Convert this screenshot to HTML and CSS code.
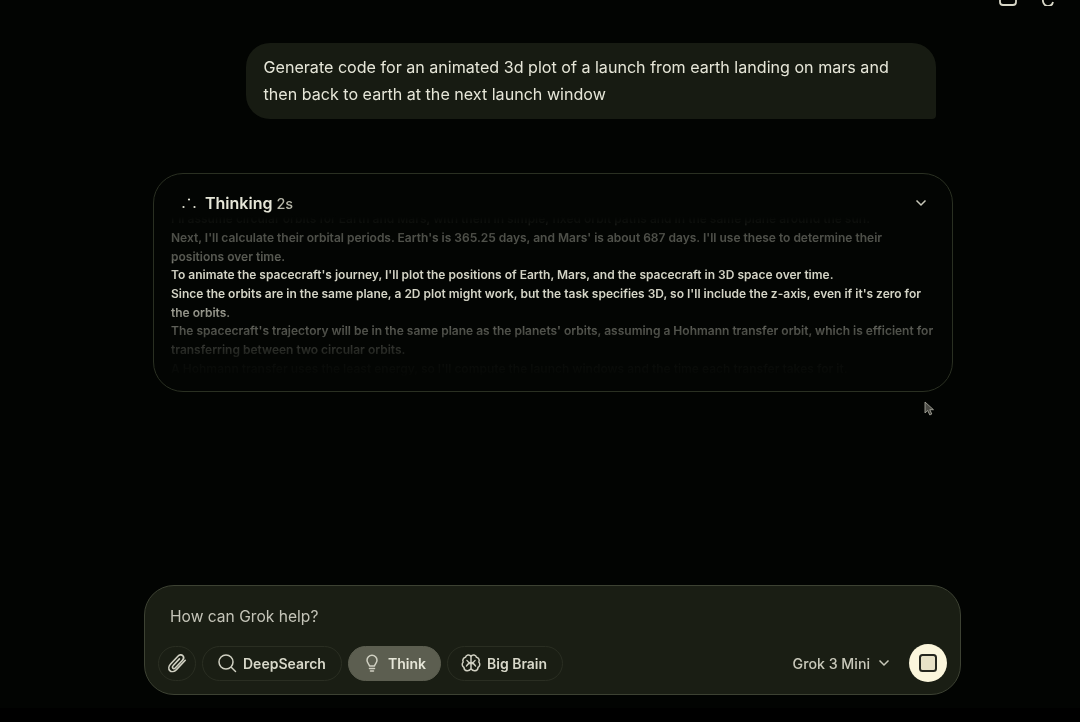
FILE: index.html
```html
<!DOCTYPE html>
<html>

<head>
    <title>Grok</title>
    <link rel="stylesheet" href="styles.css">
</head>

<body>
    <div id="page">
        <div class="topbar">
            <svg class="top-icon" width="18" height="12" viewBox="0 0 18 12"><path d="M1 1v7a3 3 0 0 0 3 3h10a3 3 0 0 0 3-3V1" /><path d="M6 4v1h6V4" /></svg>
            <svg class="top-icon" width="14" height="12" viewBox="0 0 14 12"><path d="M12 8a5 5 0 0 1-9.500 1A6 6 0 0 1 3 3" /></svg>
        </div>
        <div class="bubble">Generate code for an animated 3d plot of a launch from earth landing on mars and then back to earth at the next launch window</div>
        <div class="card">
            <div class="card-head">
                <svg class="dots" width="16" height="12" viewBox="0 0 16 12"><circle cx="2.500" cy="10" r="1.100" /><circle cx="8" cy="2.500" r="1.100" /><circle cx="13.500" cy="10" r="1.100" /></svg>
                <span class="card-title">Thinking</span>
                <span class="card-time">2s</span>
                <svg class="card-chevron" width="12" height="8" viewBox="0 0 12 8"><path d="M1.500 1.500 6 6l4.500-4.500" /></svg>
            </div>
            <div class="thoughts">
                <div class="thoughts-inner">
                    <p>I'll assume circular orbits for Earth and Mars, with them in simple, fixed orbit paths and in the same plane around the sun.</p>
                    <p>Next, I'll calculate their orbital periods. Earth's is 365.25 days, and Mars' is about 687 days. I'll use these to determine their positions over time.</p>
                    <p>To animate the spacecraft's journey, I'll plot the positions of Earth, Mars, and the spacecraft in 3D space over time.</p>
                    <p>Since the orbits are in the same plane, a 2D plot might work, but the task specifies 3D, so I'll include the z-axis, even if it's zero for the orbits.</p>
                    <p>The spacecraft's trajectory will be in the same plane as the planets' orbits, assuming a Hohmann transfer orbit, which is efficient for transferring between two circular orbits.</p>
                    <p>A Hohmann transfer uses the least energy, so I'll compute the launch windows and the time each transfer takes for it.</p>
                </div>
            </div>
        </div>
        <div class="spacer"></div>
        <div class="composer">
            <div class="prompt">How can Grok help?</div>
            <div class="tools">
                <div class="pill pill-round">
                    <svg class="icon" width="22" height="22" viewBox="0 0 20 20"><path d="M17.500 7.500 9.500 16c-2 2-4.600 2.300-6 .9s-1.200-4 .7-6l6.600-7c1.400-1.400 3.300-1.700 4.400-.6s1 3-.4 4.400l-6.200 6.600c-.8.800-1.800 1-2.400.4s-.4-1.600.4-2.400l5.600-6" /></svg>
                </div>
                <div class="pill pill-search">
                    <svg class="icon" width="20" height="20" viewBox="0 0 20 20"><circle cx="9" cy="9" r="7" /><path d="m14.500 14.500 4 4" /></svg>
                    DeepSearch
                </div>
                <div class="pill pill-think">
                    <svg class="icon" width="20" height="20" viewBox="0 0 20 20"><path d="M7.500 13c0-1.500-2.500-2.800-2.500-5.800a5 5 0 0 1 10 0c0 3-2.500 4.300-2.500 5.800Z" /><path d="M7.500 15.500h5M8.500 18h3" /></svg>
                    Think
                </div>
                <div class="pill pill-brain">
                    <svg class="icon" width="20" height="20" viewBox="0 0 20 20"><path d="M10 3.500a3 3 0 0 0-5.500.8A3.200 3.200 0 0 0 2.200 9 3.500 3.500 0 0 0 3 14.500a3.300 3.300 0 0 0 3 3.300c1.800.2 3-.7 4-2 1 1.300 2.200 2.200 4 2a3.300 3.300 0 0 0 3-3.300A3.500 3.500 0 0 0 17.800 9a3.200 3.200 0 0 0-2.300-4.700A3 3 0 0 0 10 3.500Zm0 0v12.300M6 7.500c.8 1.500 2 2.500 4 2.500s3.200-1 4-2.500M5.500 13c.8-1.500 2.500-3 4.500-3s3.700 1.500 4.500 3" /></svg>
                    Big Brain
                </div>
                <div class="model">
                    Grok 3 Mini
                    <svg class="model-chevron" width="12" height="8" viewBox="0 0 12 8"><path d="M1.500 1.500 6 6l4.500-4.500" /></svg>
                </div>
                <div class="send">
                    <svg width="20" height="20" viewBox="0 0 20 20"><rect x="2" y="2" width="16" height="16" rx="2.500" /></svg>
                </div>
            </div>
        </div>
        <svg class="cursor" width="11" height="15" viewBox="0 0 11 15"><path d="M1 1v11l2.700-2.500L5.800 14l2-1-2-4.300h3.700Z" /></svg>
    </div>
</body>

</html>
```

FILE: styles.css
```css
* {
    box-sizing: border-box;
}

html,
body {
    margin: 0;
    height: 100%;
    background-color: #000;
}

body {
    font-family: Inter, "Liberation Sans", sans-serif;
    overflow: hidden;
}

/* the source is a video frame, so everything is a bit soft */
#page {
    position: relative;
    height: 708px;
    padding: 0 94px 13px 119px;
    background-color: #020402;
    display: flex;
    flex-direction: column;
    align-items: center;
    filter: blur(.35px);
}

.topbar {
    align-self: stretch;
    height: 6px;
    margin-right: -69px;
    overflow: hidden;
    display: flex;
    justify-content: flex-end;
    align-items: flex-end;
    gap: 24px;
}

.top-icon {
    flex: none;
    fill: none;
    stroke: #d8d8c8;
    stroke-width: 1.800;
}

.bubble {
    width: 690px;
    margin-top: 37px;
    margin-left: 76px;
    padding: 11px 18px 10.500px;
    border-radius: 24px 24px 4px 24px;
    background-color: #171b12;
    color: #e6e6d8;
    font-size: 16.100px;
    line-height: 27.300px;
}

.card {
    width: 800px;
    height: 219px;
    margin-top: 54px;
    border: 1.500px solid #2a3022;
    border-radius: 30px;
    padding: 0 18px 0 17.500px;
    background-color: #030503;
}

.card-head {
    height: 37px;
    padding: 21px 7px 0 10px;
    display: flex;
    align-items: center;
    color: #e6e6d8;
}

.dots {
    fill: #e6e6d8;
    margin-right: 8px;
}

.card-title {
    font-size: 16px;
    font-weight: 600;
}

.card-time {
    margin-left: 4px;
    font-size: 14.500px;
    font-weight: 500;
    color: #b8b8aa;
}

.card-chevron,
.model-chevron {
    fill: none;
    stroke: #c8c8ba;
    stroke-width: 1.500;
}

.card-chevron {
    margin-left: auto;
}

.thoughts {
    height: 170px;
    overflow: hidden;
    -webkit-mask-image: linear-gradient(to bottom, transparent 0, transparent 3%, rgba(0, 0, 0, .06) 7%, rgba(0, 0, 0, .36) 14%, rgba(0, 0, 0, .4) 28%, #000 36%, #000 51%, rgba(0, 0, 0, .72) 59%, rgba(0, 0, 0, .38) 70%, rgba(0, 0, 0, .22) 80%, rgba(0, 0, 0, .04) 90%, transparent 100%);
    mask-image: linear-gradient(to bottom, transparent 0, transparent 3%, rgba(0, 0, 0, .06) 7%, rgba(0, 0, 0, .36) 14%, rgba(0, 0, 0, .4) 28%, #000 36%, #000 51%, rgba(0, 0, 0, .72) 59%, rgba(0, 0, 0, .38) 70%, rgba(0, 0, 0, .22) 80%, rgba(0, 0, 0, .04) 90%, transparent 100%);
}

.thoughts-inner {
    margin-top: -1px;
}

.thoughts p {
    margin: 0;
    color: #d4d4c6;
    font-size: 12px;
    font-weight: 600;
    line-height: 18.700px;
}

.spacer {
    flex: 1;
}

.composer {
    width: 817px;
    height: 110px;
    border: 1.500px solid #3d4233;
    border-radius: 30px;
    background-color: #1a1e14;
    padding: 19px 13px 0;
}

.prompt {
    padding-left: 12px;
    color: #c4c4b8;
    font-size: 15.600px;
    line-height: 24px;
}

.tools {
    margin-top: 15px;
    display: flex;
    align-items: center;
    gap: 6px;
}

.pill {
    height: 35px;
    border: 1px solid #2a2e22;
    border-radius: 18px;
    display: flex;
    align-items: center;
    gap: 6px;
    color: #d8d8ca;
    font-size: 14px;
    font-weight: 600;
}

.icon {
    flex: none;
    fill: none;
    stroke: #d0d0c2;
    stroke-width: 1.500;
    stroke-linecap: round;
    stroke-linejoin: round;
}

.pill-round {
    width: 38px;
    justify-content: center;
}

.pill-search {
    width: 140px;
    padding-left: 14px;
}

.pill-think {
    width: 93px;
    padding-left: 13px;
    border-color: #5c5e50;
    background-color: #5c5e50;
    color: #e6e6d8;
}

.pill-brain {
    width: 116px;
    padding-left: 13px;
}

.model {
    margin-left: auto;
    display: flex;
    align-items: center;
    gap: 8px;
    color: #c8c8ba;
    font-size: 14.200px;
    font-weight: 500;
}

.send {
    width: 38px;
    height: 38px;
    margin-left: 13px;
    border-radius: 50%;
    background-color: #fbf6dc;
    display: flex;
    align-items: center;
    justify-content: center;
}

.send rect {
    fill: #e8e2c6;
    stroke: #25271e;
    stroke-width: 2;
}

.cursor {
    position: absolute;
    left: 924px;
    top: 401px;
    fill: #4a4a44;
    stroke: #b0b0a4;
    stroke-width: .8;
}
```
